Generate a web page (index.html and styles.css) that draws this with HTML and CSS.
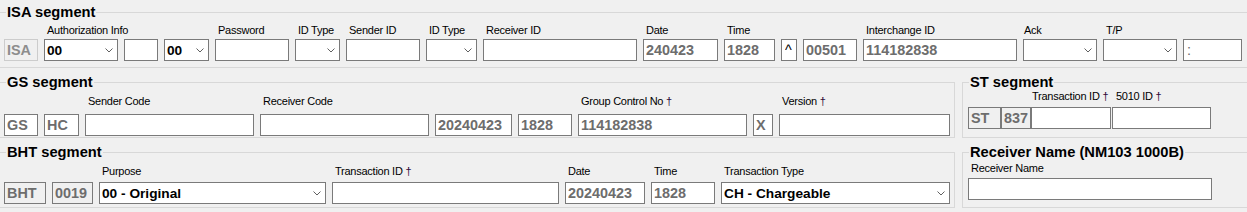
FILE: index.html
```html
<!DOCTYPE html>
<html lang="en">

<head>
    <meta charset="UTF-8">
    <title>Claim Header</title>
    <link rel="stylesheet" href="styles.css">
</head>

<body>
    <div class="page">

        <!-- ISA -->
        <div class="group isa">
            <span class="group-title">ISA segment</span>
            <div class="row">
                <div class="field w34"><label></label><input class="off" value="ISA" readonly></div>
                <div class="field w74"><label>Authorization Info</label>
                    <div class="combo"><span>00</span><svg class="chev" width="8" height="5" viewBox="0 0 8 5"><polyline points="0.5,0.5 4,4 7.5,0.5" /></svg></div>
                </div>
                <div class="field w34"><label></label><input value=""></div>
                <div class="field w45"><label></label>
                    <div class="combo"><span>00</span><svg class="chev" width="8" height="5" viewBox="0 0 8 5"><polyline points="0.5,0.5 4,4 7.5,0.5" /></svg></div>
                </div>
                <div class="field w74"><label>Password</label><input value=""></div>
                <div class="field w45"><label>ID Type</label>
                    <div class="combo"><span></span><svg class="chev" width="8" height="5" viewBox="0 0 8 5"><polyline points="0.5,0.5 4,4 7.5,0.5" /></svg></div>
                </div>
                <div class="field w74"><label>Sender ID</label><input value=""></div>
                <div class="field w51"><label>ID Type</label>
                    <div class="combo"><span></span><svg class="chev" width="8" height="5" viewBox="0 0 8 5"><polyline points="0.5,0.5 4,4 7.5,0.5" /></svg></div>
                </div>
                <div class="field w154"><label>Receiver ID</label><input value=""></div>
                <div class="field w75"><label>Date</label><input class="ro" value="240423" readonly></div>
                <div class="field w51"><label>Time</label><input class="ro" value="1828" readonly></div>
                <div class="field w16"><label></label><input class="sep" value="^"></div>
                <div class="field w54"><label></label><input class="ro" value="00501" readonly></div>
                <div class="field w154"><label>Interchange ID</label><input class="ro" value="114182838" readonly></div>
                <div class="field w74"><label class="near">Ack</label>
                    <div class="combo"><span></span><svg class="chev" width="8" height="5" viewBox="0 0 8 5"><polyline points="0.5,0.5 4,4 7.5,0.5" /></svg></div>
                </div>
                <div class="field w74"><label>T/P</label>
                    <div class="combo"><span></span><svg class="chev" width="8" height="5" viewBox="0 0 8 5"><polyline points="0.5,0.5 4,4 7.5,0.5" /></svg></div>
                </div>
                <div class="field w59"><label></label><input class="sep light" value=":"></div>
            </div>
        </div>

        <div class="pair">
            <!-- GS -->
            <div class="group gs">
                <span class="group-title">GS segment</span>
                <div class="row">
                    <div class="field w34"><label></label><input class="ro" value="GS" readonly></div>
                    <div class="field w35"><label></label><input class="ro" value="HC" readonly></div>
                    <div class="field w169"><label>Sender Code</label><input value=""></div>
                    <div class="field w169"><label>Receiver Code</label><input value=""></div>
                    <div class="field w77"><label></label><input class="ro" value="20240423" readonly></div>
                    <div class="field w54"><label></label><input class="ro" value="1828" readonly></div>
                    <div class="field w169"><label>Group Control No <span class="req">&dagger;</span></label><input class="ro" value="114182838" readonly></div>
                    <div class="field w20"><label></label><input class="ro" value="X" readonly></div>
                    <div class="field w171"><label>Version <span class="req">&dagger;</span></label><input value=""></div>
                </div>
            </div>

            <!-- ST -->
            <div class="group st">
                <span class="group-title">ST segment</span>
                <div class="row joined">
                    <div class="field w33"><label></label><input class="ro dim" value="ST" readonly></div>
                    <div class="field w30"><label></label><input class="ro dim" value="837" readonly></div>
                    <div class="field w80"><label class="flush">Transaction ID <span class="req">&dagger;</span></label><input value=""></div>
                    <div class="field w99 split"><label>5010 ID <span class="req">&dagger;</span></label><input value=""></div>
                </div>
            </div>
        </div>

        <div class="pair">
            <!-- BHT -->
            <div class="group bht">
                <span class="group-title">BHT segment</span>
                <div class="row">
                    <div class="field w42"><label></label><input class="ro dim" value="BHT" readonly></div>
                    <div class="field w41"><label></label><input class="ro dim" value="0019" readonly></div>
                    <div class="field w227"><label>Purpose</label>
                        <div class="combo"><span>00 - Original</span><svg class="chev" width="8" height="5" viewBox="0 0 8 5"><polyline points="0.5,0.5 4,4 7.5,0.5" /></svg></div>
                    </div>
                    <div class="field w227"><label>Transaction ID <span class="req">&dagger;</span></label><input value=""></div>
                    <div class="field w80"><label>Date</label><input class="ro" value="20240423" readonly></div>
                    <div class="field w64"><label>Time</label><input class="ro" value="1828" readonly></div>
                    <div class="field w229"><label>Transaction Type</label>
                        <div class="combo"><span>CH - Chargeable</span><svg class="chev" width="8" height="5" viewBox="0 0 8 5"><polyline points="0.5,0.5 4,4 7.5,0.5" /></svg></div>
                    </div>
                </div>
            </div>

            <!-- NM1 receiver -->
            <div class="group recv">
                <span class="group-title">Receiver Name (NM103 1000B)</span>
                <div class="row">
                    <div class="field w244"><label>Receiver Name</label><input value=""></div>
                </div>
            </div>
        </div>

    </div>
</body>

</html>
```
FILE: styles.css
```css
body {
    margin: 0;
    background-color: #f0f0f0;
    font-family: 'Liberation Sans', Arial, sans-serif;
    color: #000;
    overflow: hidden;
}

.page {
    margin-left: -1px;
    width: 1270px;
}

.pair {
    display: flex;
    gap: 7px;
    margin-top: 14px;
}

/* group boxes */
.group {
    position: relative;
    border: 1px solid #d8d8d8;
    box-sizing: border-box;
}

.group-title {
    position: absolute;
    top: -9px;
    left: 6px;
    padding: 0 1px;
    background-color: #f0f0f0;
    font-size: 14.7px;
    font-weight: bold;
    line-height: 16px;
    white-space: nowrap;
}

.isa {
    margin-top: 12px;
    height: 56px;
    padding: 11px 0 0 4px;
}

.gs {
    width: 956px;
    height: 56px;
    padding: 12px 0 0 4px;
}

.st {
    flex: 1;
    height: 56px;
    padding: 7px 0 0 5px;
}

.bht {
    width: 956px;
    height: 56px;
    padding: 12px 0 0 4px;
}

.recv {
    flex: 1;
    height: 56px;
    padding: 9px 0 0 5px;
}

/* rows of labelled fields */
.row {
    display: flex;
    gap: 6px;
    align-items: flex-end;
}

.row.joined {
    gap: 0;
}

.field {
    display: flex;
    flex-direction: column;
    flex: none;
}

.field label {
    display: block;
    height: 13px;
    line-height: 13px;
    padding-left: 3px;
    margin-bottom: 2px;
    font-size: 11px;
    letter-spacing: -0.25px;
    white-space: nowrap;
    color: #000;
}

.gs .field label {
    margin-bottom: 6px;
}

.st .field label {
    margin-bottom: 4px;
}

.bht .field label {
    margin-bottom: 4px;
}

.recv .field label {
    margin-bottom: 3px;
}

.field label.near {
    padding-left: 1px;
}

.field label.flush {
    padding-left: 1px;
}

.field.split {
    margin-left: 1px;
}

.field.split label {
    padding-left: 4px;
}

.req {
    color: #2e0838;
}

/* text boxes and combos */
input,
.combo {
    box-sizing: border-box;
    width: 100%;
    height: 22px;
    margin: 0;
    border: 1px solid #7a7a7a;
    background-color: #fff;
    font-family: 'Liberation Sans', Arial, sans-serif;
    font-size: 14.4px;
    font-weight: bold;
    color: #000;
    outline: none;
}

input {
    padding: 0 2px;
}

input.ro {
    color: #6d6d6d;
}

input.dim {
    background-color: #f0f0f0;
}

input.off {
    background-color: #f0f0f0;
    border-color: #cccccc;
    color: #8d8d8d;
}

input.sep {
    padding: 0 3px;
    font-weight: normal;
}

input.light {
    color: #6d6d6d;
}

.combo {
    display: flex;
    align-items: center;
    justify-content: space-between;
    padding: 0 4px 0 2px;
    font-size: 13.7px;
    white-space: nowrap;
}

.chev {
    flex: none;
}

.chev polyline {
    fill: none;
    stroke: #606060;
    stroke-width: 1;
}

/* control widths */
.w16 { width: 16px; }
.w20 { width: 20px; }
.w30 { width: 30px; }
.w33 { width: 33px; }
.w34 { width: 34px; }
.w35 { width: 35px; }
.w41 { width: 41px; }
.w42 { width: 42px; }
.w45 { width: 45px; }
.w51 { width: 51px; }
.w54 { width: 54px; }
.w59 { width: 59px; }
.w64 { width: 64px; }
.w74 { width: 74px; }
.w75 { width: 75px; }
.w77 { width: 77px; }
.w80 { width: 80px; }
.w99 { width: 99px; }
.w154 { width: 154px; }
.w169 { width: 169px; }
.w171 { width: 171px; }
.w227 { width: 227px; }
.w229 { width: 229px; }
.w244 { width: 244px; }
```
